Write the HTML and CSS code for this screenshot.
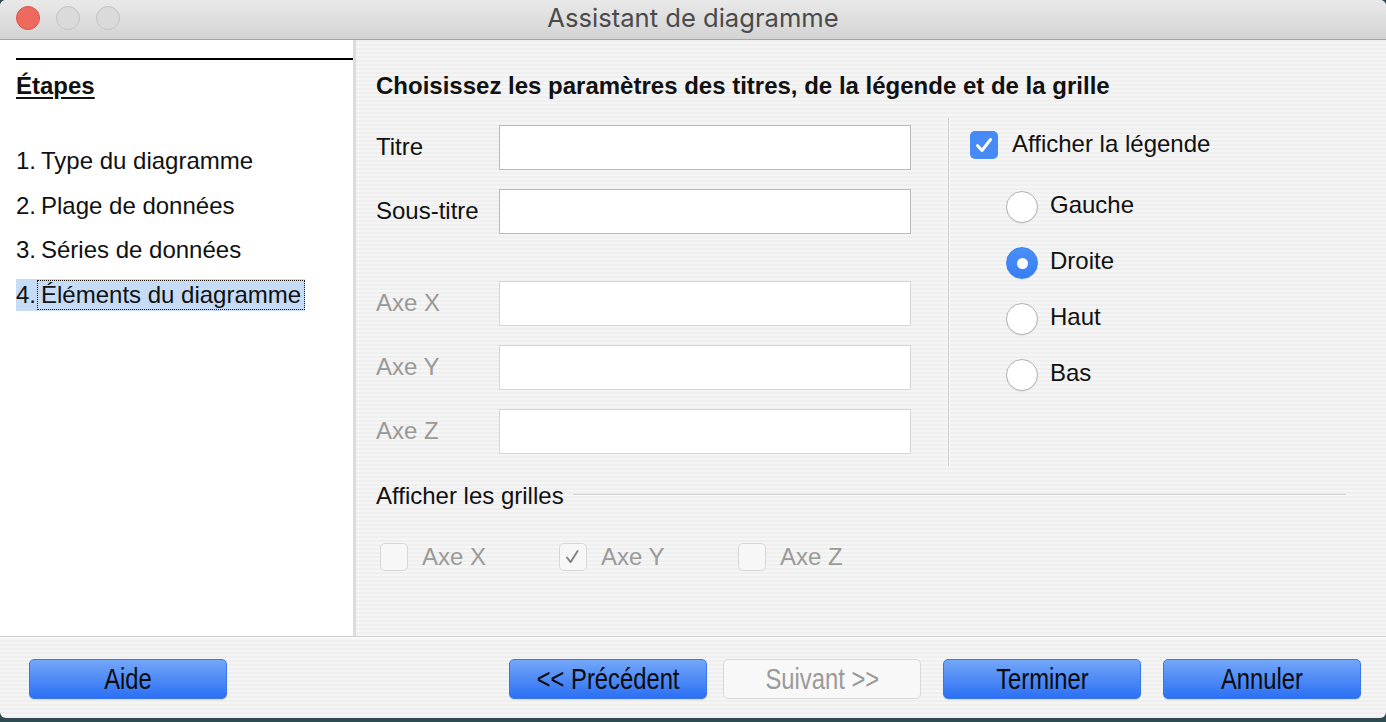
FILE: index.html
```html
<!DOCTYPE html>
<html lang="fr">
<head>
<meta charset="utf-8">
<title>Assistant de diagramme</title>
<link rel="stylesheet" href="styles.css">
</head>
<body>
<div class="window">
  <header class="titlebar">
    <div class="lights">
      <span class="light close"></span>
      <span class="light"></span>
      <span class="light"></span>
    </div>
    <div class="title">Assistant de diagramme</div>
    <div></div>
  </header>

  <div class="content">
    <aside class="steps">
      <div class="rule"></div>
      <h2 class="steps-title">Étapes</h2>
      <ol class="step-list">
        <li class="step"><span class="num">1.</span><span class="label">Type du diagramme</span></li>
        <li class="step"><span class="num">2.</span><span class="label">Plage de données</span></li>
        <li class="step"><span class="num">3.</span><span class="label">Séries de données</span></li>
        <li class="step current"><span class="num">4.</span><span class="label">Éléments du diagramme</span></li>
      </ol>
    </aside>

    <main class="page">
      <h1 class="page-title">Choisissez les paramètres des titres, de la légende et de la grille</h1>

      <div class="top">
        <div class="titles">
          <div class="field"><span class="field-label">Titre</span><div class="input"></div></div>
          <div class="field"><span class="field-label">Sous-titre</span><div class="input"></div></div>
          <div class="field disabled spaced"><span class="field-label">Axe X</span><div class="input"></div></div>
          <div class="field disabled"><span class="field-label">Axe Y</span><div class="input"></div></div>
          <div class="field disabled"><span class="field-label">Axe Z</span><div class="input"></div></div>
        </div>
        <div class="vsep"></div>
        <div class="legend">
          <div class="check-row">
            <span class="checkbox on">
              <svg viewBox="0 0 28 28" width="28" height="28"><path d="M7.5 14.5 L12 19.5 L20.5 8.5" fill="none" stroke="#fff" stroke-width="3" stroke-linecap="round" stroke-linejoin="round"/></svg>
            </span>
            <span class="row-text">Afficher la légende</span>
          </div>
          <div class="radios">
            <div class="radio-row"><span class="radio"></span><span class="row-text">Gauche</span></div>
            <div class="radio-row"><span class="radio on"></span><span class="row-text">Droite</span></div>
            <div class="radio-row"><span class="radio"></span><span class="row-text">Haut</span></div>
            <div class="radio-row"><span class="radio"></span><span class="row-text">Bas</span></div>
          </div>
        </div>
      </div>

      <div class="grid-head"><span>Afficher les grilles</span><span class="hline"></span></div>
      <div class="grid-opts">
        <div class="opt"><span class="checkbox disabled"></span><span>Axe X</span></div>
        <div class="opt"><span class="checkbox disabled">
          <svg viewBox="0 0 28 28" width="26" height="26"><path d="M7.5 14.5 L11.5 19.5 L19 7.5" fill="none" stroke="#808080" stroke-width="2" stroke-linecap="round" stroke-linejoin="round"/></svg>
        </span><span>Axe Y</span></div>
        <div class="opt"><span class="checkbox disabled"></span><span>Axe Z</span></div>
      </div>
    </main>
  </div>

  <footer class="buttons">
    <div class="btn"><span>Aide</span></div>
    <div class="spacer"></div>
    <div class="btn"><span>&lt;&lt; Précédent</span></div>
    <div class="btn disabled next"><span>Suivant &gt;&gt;</span></div>
    <div class="btn wide-gap"><span>Terminer</span></div>
    <div class="btn wide-gap"><span>Annuler</span></div>
  </footer>
</div>
</body>
</html>
```

FILE: styles.css
```css
html, body {
  margin: 0;
  padding: 0;
}
body {
  background: #2d4b50;
  width: 1386px;
  height: 722px;
  overflow: hidden;
  font-family: "Liberation Sans", Arial, sans-serif;
  color: #111;
}
.window {
  width: 1386px;
  height: 718px;
  display: flex;
  flex-direction: column;
  border-radius: 6px;
  overflow: hidden;
  background: repeating-linear-gradient(180deg, #efefef 0px, #efefef 2px, #f5f5f5 2px, #f5f5f5 4px);
}

/* title bar */
.titlebar {
  height: 39px;
  flex: none;
  border-bottom: 1px solid #a4a4a4;
  background: linear-gradient(180deg, #e9e9e9 0%, #d3d3d3 100%);
  display: grid;
  grid-template-columns: 1fr auto 1fr;
  align-items: center;
}
.lights {
  display: flex;
  gap: 16px;
  padding-left: 16px;
  margin-top: -3px;
}
.light {
  width: 22px;
  height: 22px;
  border-radius: 50%;
  background: #dadada;
  border: 1px solid #c2c2c2;
}
.light.close {
  background: #ef6a5e;
  border-color: #dc5448;
}
.title {
  font-family: Inter, "Liberation Sans", sans-serif;
  font-size: 25.6px;
  color: #4a4a4a;
  margin-top: -4px;
}

/* content */
.content {
  display: flex;
  height: 596px;
  flex: none;
}
.steps {
  width: 337px;
  padding-left: 16px;
  background: #fff;
  border-right: 3px solid #dcdcdc;
}
.rule {
  margin-top: 18px;
  height: 2px;
  background: #000;
}
.steps-title {
  margin: 12px 0 0;
  font-size: 24px;
  line-height: 28px;
  font-weight: bold;
  text-decoration: underline;
  text-underline-offset: 3px;
}
.step-list {
  list-style: none;
  margin: 45px 0 0;
  padding: 0;
  display: flex;
  flex-direction: column;
  align-items: flex-start;
  gap: 12.7px;
}
.step {
  display: flex;
  align-items: center;
  height: 32px;
  font-size: 24px;
}
.num {
  width: 21px;
}
.label {
  padding: 0 3px;
  border: 1px solid transparent;
  line-height: 28px;
}
.step.current {
  background: #c6dcf6;
}
.step.current .label {
  border: 1px dotted #1a1008;
  line-height: 28px;
}

/* page */
.page {
  flex: 1;
  padding: 32px 40px 0 20px;
}
.page-title {
  margin: 0;
  font-size: 24px;
  line-height: 28px;
  font-weight: bold;
}
.top {
  display: flex;
  margin-top: 18px;
}
.titles {
  display: flex;
  flex-direction: column;
  gap: 19px;
  padding: 7px 0 12px;
}
.field {
  display: flex;
  align-items: center;
  font-size: 24px;
}
.field-label {
  width: 123px;
  margin-top: -2px;
}
.input {
  width: 410px;
  height: 43px;
  background: #fff;
  border: 1px solid #b9b9b9;
}
.field.spaced {
  margin-top: 28px;
}
.field.disabled .field-label {
  color: #999;
}
.field.disabled .input {
  border-color: #d6d6d6;
}
.vsep {
  width: 1px;
  background: #cdcdcd;
  border-right: 1px solid #fafafa;
  margin-left: 37px;
}
.legend {
  padding: 13px 0 0 20px;
  font-size: 24px;
}
.check-row {
  display: flex;
  align-items: center;
  gap: 14px;
  height: 28px;
}
.row-text {
  margin-top: -4px;
}
.check-row .row-text {
  margin-top: -2px;
}
.checkbox {
  width: 28px;
  height: 28px;
  box-sizing: border-box;
  border-radius: 5px;
  display: flex;
  align-items: center;
  justify-content: center;
  flex: none;
}
.checkbox.on {
  background: #468af5;
}
.checkbox.disabled {
  background: #f7f7f7;
  border: 1px solid #d6d6d6;
}
.radios {
  margin: 32px 0 0 36px;
  display: flex;
  flex-direction: column;
  gap: 24px;
}
.radio-row {
  display: flex;
  align-items: center;
  gap: 12px;
  height: 32px;
}
.radio {
  width: 32px;
  height: 32px;
  box-sizing: border-box;
  border-radius: 50%;
  background: #fff;
  border: 1px solid #b3b3b3;
  box-shadow: 0 1px 1px rgba(0, 0, 0, 0.06);
  display: flex;
  align-items: center;
  justify-content: center;
  flex: none;
}
.radio.on {
  background: linear-gradient(180deg, #4a8ff7 0%, #3680f5 100%);
  border-color: #3a82f0;
}
.radio.on::after {
  content: "";
  width: 11px;
  height: 11px;
  border-radius: 50%;
  background: #fff;
}
.grid-head {
  display: flex;
  align-items: center;
  gap: 9px;
  margin-top: 16px;
  height: 28px;
  font-size: 24px;
}
.hline {
  flex: 1;
  height: 1px;
  background: #cfcfcf;
  border-bottom: 1px solid #fbfbfb;
  margin-top: -3px;
}
.grid-opts {
  display: flex;
  margin-top: 33px;
}
.opt {
  width: 179px;
  box-sizing: border-box;
  padding-left: 4px;
  display: flex;
  align-items: center;
  gap: 14px;
  font-size: 24px;
  color: #9a9a9a;
}

/* footer */
.buttons {
  height: 82px;
  flex: none;
  box-sizing: border-box;
  border-top: 1px solid #cdcdcd;
  box-shadow: inset 0 1px 0 #ffffff;
  display: flex;
  align-items: flex-start;
  padding: 22px 25px 0 29px;
}
.spacer {
  flex: 1;
}
.btn {
  width: 198px;
  height: 40px;
  box-sizing: border-box;
  border-radius: 5px;
  background: linear-gradient(180deg, #73a7f8 0%, #2b6ff5 100%);
  border: 1px solid #3a78e6;
  box-shadow: 0 1px 1px rgba(0, 0, 0, 0.12);
  display: flex;
  align-items: center;
  justify-content: center;
  color: #0b0b0b;
}
.btn span {
  display: inline-block;
  font-size: 29px;
  transform: scaleX(0.82);
  white-space: nowrap;
}
.btn.disabled {
  background: #f8f8f8;
  border: 1px solid #d9d9d9;
  box-shadow: none;
  color: #9a9a9a;
}
.btn.next {
  margin-left: 16px;
}
.btn.wide-gap {
  margin-left: 22px;
}
```
